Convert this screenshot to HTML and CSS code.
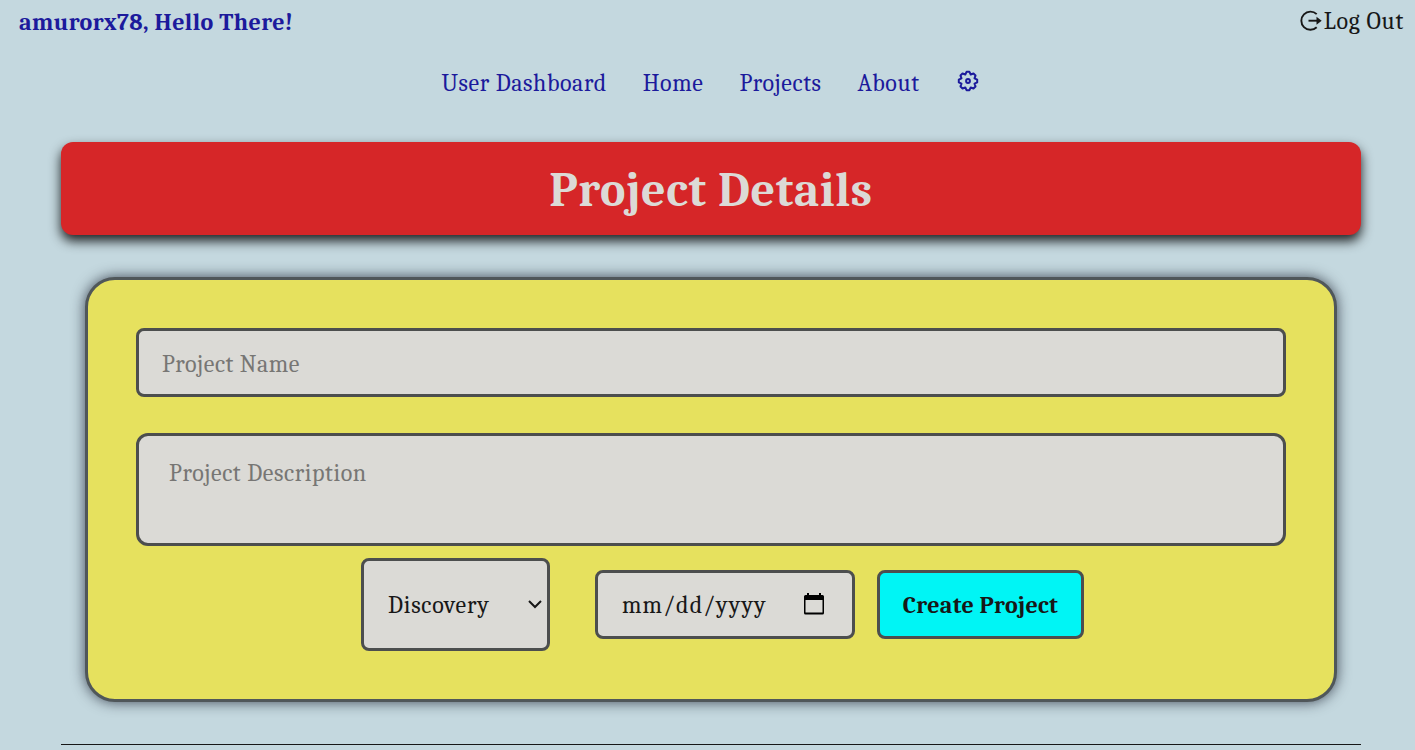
FILE: index.html
```html
<!DOCTYPE html>
<html lang="en">
<head>
<meta charset="utf-8">
<title>Project Details</title>
<link rel="stylesheet" href="styles.css">
</head>
<body>
<header class="topbar">
  <p class="greeting">amurorx78, Hello There!</p>
  <a class="logout">
    <svg class="logout-icon" viewBox="0 0 24 24" width="24" height="24" fill="none" stroke="currentColor" stroke-width="1.9">
      <path d="M17.7 5.100A9.100 9.100 0 1 0 17.700 18.300"/>
      <path d="M9.500 11.700h9"/>
      <path d="M17.500 7.700l5.200 4-5.200 4z" fill="currentColor" stroke="none"/>
    </svg><span>Log Out</span>
  </a>
</header>
<nav class="nav">
  <a>User Dashboard</a>
  <a>Home</a>
  <a>Projects</a>
  <a>About</a>
  <a aria-label="Settings">
    <svg viewBox="0 0 24 24" width="24" height="24" fill="none" stroke="currentColor" stroke-width="2" stroke-linejoin="round">
      <path d="M21.190 10.550V13.450L18.500 14.700L19.520 17.470L17.470 19.520L14.700 18.500L13.450 21.190H10.550L9.300 18.500L6.530 19.520L4.480 17.470L5.500 14.700L2.810 13.450V10.550L5.500 9.300L4.480 6.530L6.530 4.480L9.300 5.500L10.550 2.810H13.450L14.700 5.500L17.470 4.480L19.520 6.530L18.500 9.300Z"/>
      <circle cx="12" cy="12" r="1.900"/>
    </svg>
  </a>
</nav>
<main class="main">
  <h1 class="banner">Project Details</h1>
  <form class="card">
    <input class="field name" type="text" placeholder="Project Name">
    <textarea class="field description" placeholder="Project Description"></textarea>
    <div class="controls">
      <div class="field stage">
        <span>Discovery</span>
        <svg width="14" height="9" viewBox="0 0 14 9" fill="none" stroke="currentColor" stroke-width="2"><path d="M1 1l6 6 6-6"/></svg>
      </div>
      <div class="field date">
        <span>mm/dd/yyyy</span>
        <svg class="calendar" width="20" height="22" viewBox="0 0 20 22"><path fill-rule="evenodd" d="M3 0h2v2h10V0h2v2h1.500a1.500 1.500 0 0 1 1.500 1.500V20a1.500 1.500 0 0 1-1.500 1.500h-17A1.500 1.500 0 0 1 0 20V3.500A1.500 1.500 0 0 1 1.500 2H3zM1.500 7v12.500h17V7z"/></svg>
      </div>
      <button class="field create" type="button">Create Project</button>
    </div>
  </form>
  <hr class="rule">
</main>
</body>
</html>
```
FILE: styles.css
```css
* { box-sizing: border-box; }

body {
  margin: 0;
  height: 750px;
  overflow: hidden;
  background: #c4d8df;
  color: #171717;
  font: 24px/28px Cambria, Caladea, "DejaVu Serif Condensed", serif;
  letter-spacing: 0.55px;
}

.topbar {
  display: flex;
  justify-content: space-between;
  height: 62px;
  padding: 7px 11px 0 19px;
}

.greeting {
  margin: 0;
  color: #1c1a9c;
  font-weight: bold;
  letter-spacing: 0.38px;
  line-height: 30px;
}

.logout { display: flex; height: 28px; letter-spacing: 0.75px; }
.logout-icon { margin: 2px 1px 0 0; }

.nav {
  display: flex;
  justify-content: center;
  gap: 36px;
  height: 80px;
  padding: 7px 0 0 6px;
  color: #1c1a9c;
  letter-spacing: 0.58px;
}

.main { padding: 0 54px 0 61px; }

.banner {
  height: 93px;
  margin: 0 0 42px;
  border-radius: 12px;
  background: #d62628;
  box-shadow: 0 6px 12px rgba(0, 0, 0, 0.85);
  color: #dcdad6;
  font-size: 48px;
  letter-spacing: 0.65px;
  line-height: 98px;
  text-align: center;
}

.card {
  height: 425px;
  margin: 0 24px;
  padding: 48px;
  border: 3px solid #50575a;
  border-radius: 30px;
  background: #e6e15e;
  box-shadow: 0 0 14px rgba(20, 25, 40, 0.75);
}

.field {
  display: block;
  margin: 0;
  border: 3px solid #4c4e4e;
  border-radius: 8px;
  background: #dbdad6;
  color: #171717;
  font: inherit;
  letter-spacing: 0.55px;
}

.field::placeholder { color: #777674; opacity: 1; }

.name {
  width: 100%;
  height: 69px;
  margin-bottom: 36px;
  padding: 3px 23px 0;
}

.description {
  width: 100%;
  height: 113px;
  margin-bottom: 12px;
  padding: 23px 30px;
  border-radius: 12px;
  letter-spacing: 0.6px;
  resize: none;
}

.controls {
  display: flex;
  align-items: center;
  padding-left: 225px;
}

.stage, .date {
  display: flex;
  align-items: center;
  justify-content: space-between;
}

.stage {
  width: 189px;
  height: 93px;
  padding: 0 5px 0 24px;
  margin-right: 45px;
  letter-spacing: 0.75px;
}

.date {
  width: 260px;
  height: 69px;
  padding: 1px 28px 0 24px;
  margin-right: 22px;
  letter-spacing: 1.1px;
}

.calendar { margin-bottom: 3px; fill: #000; }

.create {
  width: 207px;
  height: 69px;
  padding: 0;
  background: #00f5f5;
  font-weight: bold;
  letter-spacing: 0.3px;
}

.rule {
  height: 1px;
  margin: 42px 0 0;
  border: 0;
  background: #171717;
}
```
